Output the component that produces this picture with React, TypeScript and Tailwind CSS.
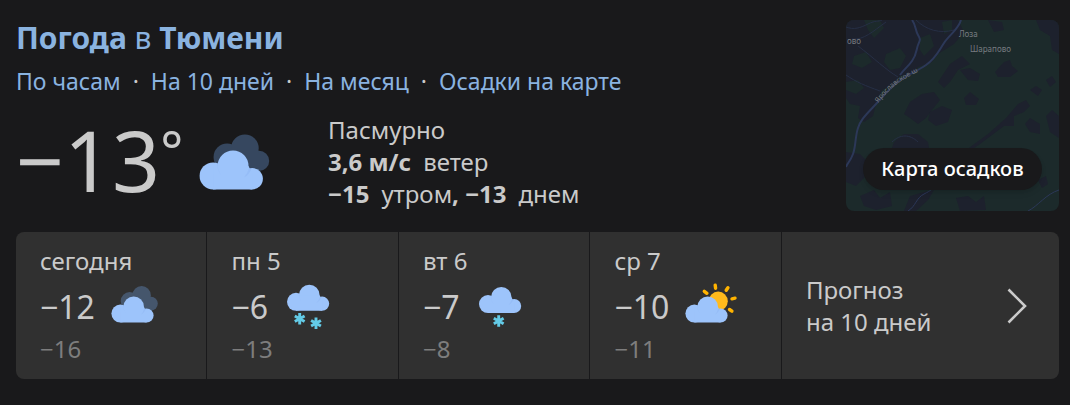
import React from 'react';

type Condition = 'cloudy' | 'snow' | 'light-snow' | 'partly';

interface DayForecast {
  label: string;
  high: string;
  low: string;
  condition: Condition;
}

const days: DayForecast[] = [
  { label: 'сегодня', high: '−12', low: '−16', condition: 'cloudy' },
  { label: 'пн 5', high: '−6', low: '−13', condition: 'snow' },
  { label: 'вт 6', high: '−7', low: '−8', condition: 'light-snow' },
  { label: 'ср 7', high: '−10', low: '−11', condition: 'partly' },
];

const links = ['По часам', 'На 10 дней', 'На месяц', 'Осадки на карте'];

const Cloud: React.FC<{ transform?: string }> = ({ transform }) => (
  <g transform={transform}>
    <g fill="#9dc4fb">
      <circle cx="9.4" cy="30.6" r="9" />
      <circle cx="22.7" cy="23.9" r="10.3" />
      <circle cx="35.5" cy="32.5" r="7.1" />
      <path d="M9.4 39.6V24H33l2.5 5v10.6Z" />
    </g>
    <path fill="#7fa9ea" opacity="0.3" d="M12.3 22a13 13 0 0 0 3 9 12 12 0 0 1-2.7-9Z" />
    <path fill="#7fa9ea" opacity="0.25" d="M33.1 26a11 11 0 0 1-3 5.5c2-.8 3.6-2.8 5-5.9Z" />
  </g>
);

const Flake: React.FC<{ x: number; y: number }> = ({ x, y }) => (
  <g transform={`translate(${x} ${y})`} stroke="#63cbe7" strokeWidth="2.9">
    <path d="M0-5.7V5.7M-4.9-2.8 4.9 2.8M-4.9 2.8 4.9-2.8" />
  </g>
);

const WeatherIcon: React.FC<{ condition: Condition; className: string }> = ({ condition, className }) => (
  <svg viewBox="0 0 48 48" className={`shrink-0 overflow-visible ${className}`} aria-hidden="true">
    {condition === 'cloudy' && (
      <>
        <g fill="#6c9ddd" opacity="0.35">
          <circle cx="18.7" cy="18" r="9" />
          <circle cx="30.6" cy="12.2" r="9.2" />
          <circle cx="40" cy="20.6" r="6.8" />
          <path d="M18.7 27V12H39l1 4v11.4Z" />
        </g>
        <Cloud />
      </>
    )}
    {condition === 'snow' && (
      <>
        <Cloud transform="translate(2.6 -11.8)" />
        <Flake x={15.7} y={35.7} />
        <Flake x={32} y={40.3} />
      </>
    )}
    {condition === 'light-snow' && (
      <>
        <Cloud transform="translate(2.6 -9.5)" />
        <Flake x={22.7} y={38} />
      </>
    )}
    {condition === 'partly' && (
      <>
        <circle cx="33.2" cy="18.2" r="9.6" fill="#ffba1c" />
        <path
          stroke="#ffb300"
          strokeWidth="3.4"
          strokeLinecap="round"
          d="m30.2 2.2.4 3M42.9 4.7l-1.7 2.6M50 15.2l-3 .6M44.5 26.5l2.4 1.7M19.3 8.3l2.6 2"
        />
        <Cloud />
      </>
    )}
  </svg>
);

const PrecipitationMap: React.FC = () => (
  <svg
    viewBox="0 0 213 191"
    preserveAspectRatio="xMidYMid slice"
    className="absolute inset-0 h-full w-full"
    aria-hidden="true"
  >
    <rect width="213" height="191" fill="#1c2a2b" />
    <g fill="#1d212d">
      <path d="M0 0H112L118 12 108 24 92 34 86 42 72 47 66 54 54 56 48 64 36 70 30 84 27 96 18 102 12 98 14 86 4 84 0 78Z" />
      <path d="M104 44 116 36 124 44 112 50 104 62 98 68 92 62Z" />
      <path d="M64 82 76 74 88 72 94 80 86 90 80 98 72 104 64 98 58 94Z" />
      <path d="M84 92 96 86 106 90 102 102 90 106 82 100Z" />
      <path d="M118 78 124 72 133 79 130 85 120 85Z" />
      <path d="M114 50 124 48 134 54 132 61 122 60Z" />
      <path d="M149 52 158 42 164 40 166 46 172 51 164 57 152 57Z" />
      <path d="M142 0 156 2 158 10 148 12Z" />
      <path d="M190 0H213V34L206 30 204 16 194 10Z" />
      <path d="M184 70 190 66 196 70 192 76Z" />
      <path d="M200 60 206 56 210 62 204 67Z" />
      <path d="M120 130 142 114 160 98 172 84 180 80 184 86 178 92 168 96 168 106 158 106 134 124 122 132Z" />
      <path d="M179 104 184 98 194 104 194 114 184 112Z" />
      <path d="M200 96 206 90 213 96V118L204 112Z" />
      <path d="M48 122 58 114 72 114 82 122 84 134 60 134 46 128Z" />
      <path d="M0 132 14 134 24 144 18 158 10 166 0 162Z" />
      <path d="M14 176 28 170 34 178 44 172 46 186 30 190 18 186Z" />
      <path d="M110 178 122 176 130 182 138 176 140 190 114 191Z" />
      <path d="M192 160 200 156 202 164 196 168Z" />
      <path d="M64 176 78 172 88 170 82 180 70 191 58 191Z" />
    </g>
    <g fill="#1c2a2b">
      <path d="M18 0H34L38 8 28 18 22 10Z" />
      <path d="M74 18 84 14 88 26 78 36 74 30Z" />
      <path d="M8 36 20 32 26 42 16 48 6 44Z" />
      <path d="M40 34 54 28 60 36 54 48 44 50 38 42Z" />
      <path d="M0 62 12 60 18 68 10 74 0 70Z" />
      <path d="M96 2 106 0 106 10 98 14Z" />
    </g>
    <g fill="none" stroke="#262f45" strokeWidth="1">
      <path d="M0 7C8 10 14 8 22 4S32 2 36 0" />
      <path d="M6 19C18 20 26 12 40 2" />
      <path d="M12 26C28 38 40 50 52 57" />
      <path d="M0 55C10 62 20 66 34 71" />
      <path d="M70 0C80 10 94 14 108 10" />
      <path d="M46 122C54 114 64 114 72 122" />
    </g>
    <g fill="none" stroke="#2c3858" strokeWidth="2">
      <path d="M66 0C70 5 69 10 72 15S74 20 72 25 71 34 66 41 58 49 54 55" />
      <path d="M115 0C112 10 104 14 98 23S90 38 80 45 62 54 53 61 40 73 30 84 15 99 12 108 10 126 7 134 2 142 0 147" />
      <path d="M62 191C70 186 70 178 78 174S84 170 88 168" strokeWidth="1" />
      <path d="M182 191C192 186 200 174 213 170" strokeWidth="1" />
    </g>
    <g fill="#777b80" fontSize="8">
      <text x="1" y="24">ово</text>
      <text x="113" y="17">Лоза</text>
      <text x="124" y="32">Шарапово</text>
      <path id="road" d="M32 83C44 68 54 60 76 50" fill="none" />
      <text fontSize="7">
        <textPath href="#road">Ярославское ш</textPath>
      </text>
    </g>
  </svg>
);

const App: React.FC = () => {
  return (
    <main className="min-h-screen bg-[#19191b] pt-5 pr-[11px] pb-6 pl-4 font-['Noto_Sans','Open_Sans',sans-serif] text-[#cacaca]">
      <header className="flex items-start justify-between">
        <div>
          <h1 className="text-[30px] leading-9 font-bold text-[#8ab3e0]">
            <a href="#weather">
              Погода <span className="font-normal">в</span> Тюмени
            </a>
          </h1>

          <nav className="mt-2 flex gap-3 text-[23px] leading-[34px]">
            {links.map((link, i) => (
              <React.Fragment key={link}>
                {i > 0 && <span>·</span>}
                <a href="#forecast" className="text-[#8ab3e0]">{link}</a>
              </React.Fragment>
            ))}
          </nav>

          <div className="mt-4 flex items-start">
            <div className="flex w-78 items-start">
              <span className="text-[84px] leading-23">−13</span>
              <span className="text-[54px] leading-18">°</span>
              <WeatherIcon condition="cloudy" className="mt-4 ml-4 h-18 w-18" />
            </div>
            <div className="text-2xl leading-8">
              <p>Пасмурно</p>
              <p><b>3,6 м/с</b>&ensp;ветер</p>
              <p><b>−15</b>&ensp;утром<b>, −13</b>&ensp;днем</p>
            </div>
          </div>
        </div>

        <a href="#map" className="relative flex h-[191px] w-[213px] flex-col items-center justify-end overflow-hidden rounded-lg pb-[21px]">
          <PrecipitationMap />
          <span className="relative rounded-full bg-[#19191b] px-[18px] py-2 text-xl leading-[26px] font-medium text-white shadow-md">
            Карта осадков
          </span>
        </a>
      </header>

      <section className="mt-[21px] grid grid-cols-[11fr_11fr_11fr_11fr_16fr] gap-px overflow-hidden rounded-lg">
        {days.map(day => (
          <a key={day.label} href="#day" className="bg-[#303030] px-6 pt-[11px] pb-4">
            <div className="text-2xl leading-9">{day.label}</div>
            <div className="flex items-center gap-4">
              <span className="text-[32px] leading-14">{day.high}</span>
              <WeatherIcon condition={day.condition} className="h-12 w-12" />
            </div>
            <div className="text-2xl leading-7 text-[#7d7d7d]">{day.low}</div>
          </a>
        ))}

        <a href="#ten-days" className="flex items-center justify-between bg-[#303030] pr-8 pl-6 text-2xl leading-8">
          <span>Прогноз<br />на 10 дней</span>
          <svg viewBox="0 0 20 36" className="h-9 w-5" fill="none" stroke="#cacaca" strokeWidth="2.6" aria-hidden="true">
            <path d="M1.5 1.5 18 18 1.5 34.5" />
          </svg>
        </a>
      </section>
    </main>
  );
};

export default App;
